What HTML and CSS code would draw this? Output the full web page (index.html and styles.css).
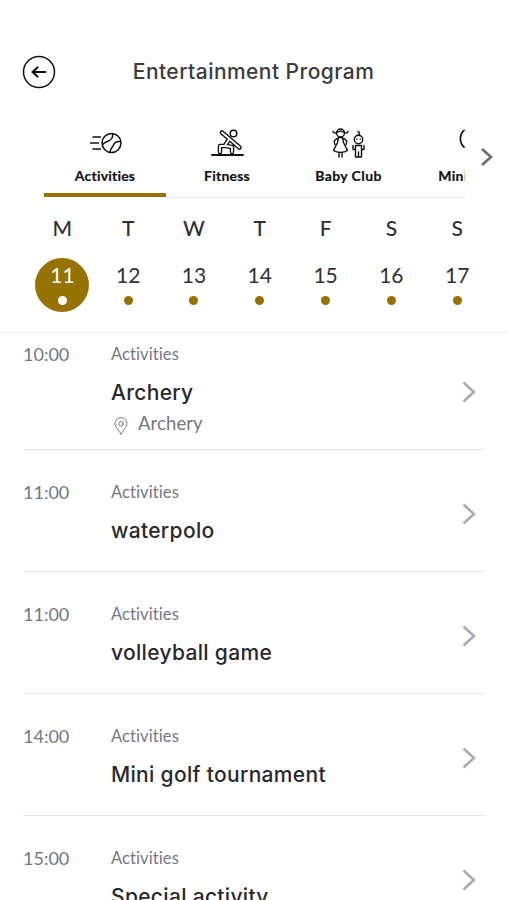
FILE: index.html
```html
<!DOCTYPE html>
<html lang="en">
<head>
<meta charset="utf-8">
<title>Entertainment Program</title>
<link rel="stylesheet" href="styles.css">
</head>
<body>
<div class="app">
  <header class="header">
    <button class="back" aria-label="Back">
      <svg width="34" height="34" viewBox="0 0 34 34"><circle cx="17" cy="17" r="15.500" stroke-width="1.500"/><path d="M23.500 17H11M15.500 12.500L10.500 17l5 4.500" stroke-width="2.200"/></svg>
    </button>
    <h1 class="page-title">Entertainment Program</h1>
  </header>

  <div class="tabs-row">
    <nav class="tabs">
      <a class="tab active">
        <svg class="icon" width="34" height="32" viewBox="0 0 34 32"><circle cx="23.500" cy="16" r="9.500"/><path d="M5 10h7.500M2.500 16h8M5 22h7.500M24.500 6.700c1 4-1 6-4.500 7.500s-5 1.500-5.500 4M32.500 14.500c-4.500-.5-6 1-7 3.500s-3 3-3.500 7"/></svg>
        <span class="label">Activities</span>
      </a>
      <a class="tab">
        <svg class="icon" width="34" height="32" viewBox="0 0 34 32"><path d="M2 28h31" stroke-width="1.800"/><g class="limbs"><path d="M19 12.500l-4 6M10 25v-6h5.500L22 20v5M12 5.500l17.500 15"/></g><g class="limbs-fill"><path d="M19 12.500l-4 6M10 25v-6h5.500L22 20v5M12 5.500l17.500 15"/></g><circle cx="23.500" cy="6.500" r="3.300"/></svg>
        <span class="label">Fitness</span>
      </a>
      <a class="tab">
        <svg class="icon kids" width="36" height="32" viewBox="0 0 36 32"><circle cx="10.500" cy="6" r="4"/><path d="M7 5c2 .2 2.500-1 3.500-1s1.500 1.200 3.500 1M6.500 5.500C5 6.500 3.500 6 3 4.500M14.500 5.500c1.500 1 3 .5 3.500-1M8.500 10.500h4l1 5 4 8c-3 2.500-11 2.500-14 0l4-8zM7 11.500L4.200 14l.6 3.500M14 11.500l2.800 2.500-.6 3.500M9 25.500V30M12 25.500V30"/><circle cx="28.500" cy="12.500" r="4.200"/><path d="M28.500 8.200c1.500-1 1.200-3-.5-3.700M26.800 12.200h.1M30.200 12.200h.1M25.500 18.500h6V30h-6zM25.500 22.500h-2.500v-4M31.500 22.500h2.500v-4M28.500 25v5"/></svg>
        <span class="label">Baby Club</span>
      </a>
      <a class="tab">
        <svg class="icon" width="34" height="32" viewBox="0 0 34 32"><path d="M10 3.500C5.200 7 5.200 16 10 20" stroke-width="1.700"/></svg>
        <span class="label">Mini Club</span>
      </a>
    </nav>
    <svg class="next" width="14" height="20" viewBox="0 0 14 20"><path d="M2 2l9 8-9 8"/></svg>
  </div>

  <section class="week">
    <div class="day selected"><b>M</b><span class="date">11<i></i></span></div>
    <div class="day"><b>T</b><span class="date">12<i></i></span></div>
    <div class="day"><b>W</b><span class="date">13<i></i></span></div>
    <div class="day"><b>T</b><span class="date">14<i></i></span></div>
    <div class="day"><b>F</b><span class="date">15<i></i></span></div>
    <div class="day"><b>S</b><span class="date">16<i></i></span></div>
    <div class="day"><b>S</b><span class="date">17<i></i></span></div>
  </section>

  <main class="events">
    <article class="event first">
      <time>10:00</time>
      <div class="info"><p class="category">Activities</p><h2>Archery</h2>
        <p class="place"><svg width="14" height="18" viewBox="0 0 14 18"><path d="M7 17C4.500 13 1 10 1 6.700a6 6 0 0 1 12 0C13 10 9.500 13 7 17z"/><circle cx="7" cy="6.800" r="2.300"/></svg><span>Archery</span></p></div>
      <svg class="chevron" width="16" height="22" viewBox="0 0 16 22"><path d="M2.500 1.500L13 11 2.500 20.500"/></svg>
    </article>
    <article class="event">
      <time>11:00</time>
      <div class="info"><p class="category">Activities</p><h2>waterpolo</h2></div>
      <svg class="chevron" width="16" height="22" viewBox="0 0 16 22"><path d="M2.500 1.500L13 11 2.500 20.500"/></svg>
    </article>
    <article class="event">
      <time>11:00</time>
      <div class="info"><p class="category">Activities</p><h2>volleyball game</h2></div>
      <svg class="chevron" width="16" height="22" viewBox="0 0 16 22"><path d="M2.500 1.500L13 11 2.500 20.500"/></svg>
    </article>
    <article class="event">
      <time>14:00</time>
      <div class="info"><p class="category">Activities</p><h2>Mini golf tournament</h2></div>
      <svg class="chevron" width="16" height="22" viewBox="0 0 16 22"><path d="M2.500 1.500L13 11 2.500 20.500"/></svg>
    </article>
    <article class="event">
      <time>15:00</time>
      <div class="info"><p class="category">Activities</p><h2>Special activity</h2></div>
      <svg class="chevron" width="16" height="22" viewBox="0 0 16 22"><path d="M2.500 1.500L13 11 2.500 20.500"/></svg>
    </article>
  </main>
</div>
</body>
</html>
```
FILE: styles.css
```css
* { box-sizing: border-box; margin: 0; padding: 0; }
body { background: #fff; font-family: Lato, "Open Sans", sans-serif; font-variant-ligatures: none; color: #303136; }
svg { display: block; fill: none; stroke: currentColor; stroke-linecap: round; stroke-linejoin: round; }
.app { width: 507px; height: 900px; overflow: hidden; }

.header { display: grid; grid-template-columns: 34px 1fr 34px; align-items: center; height: 127px; padding: 33px 22px 16px; }
.back { width: 34px; height: 34px; border: 0; background: none; color: #111; }
.page-title { font: 500 21px/30px Inter, sans-serif; letter-spacing: .45px; text-align: center; white-space: nowrap; color: #3b3b40; }

.tabs-row { display: flex; align-items: center; height: 72px; padding-left: 44px; }
.tabs { display: flex; width: 421px; height: 72px; overflow: hidden; margin-right: 15px; }
.tab { flex: 0 0 122px; display: flex; flex-direction: column; align-items: center; height: 71px; border-bottom: 1px solid #e6e6e8; color: #111; }
.tab .icon { stroke-width: 1.500; margin-left: -1px; }
.tab .kids { stroke-width: 1.400; margin-left: -3px; }
.limbs { stroke-width: 4.600; }
.limbs-fill { stroke: #fff; stroke-width: 1.800; }
.tab .label { margin-top: 7px; height: 27px; font: 700 14px/20px Lato, sans-serif; font-variant-ligatures: none; -webkit-text-stroke: .2px; letter-spacing: .2px; white-space: nowrap; }
.tab:nth-child(n+3) .label { margin-left: -1px; letter-spacing: .4px; }
.tab:nth-child(4) .label { margin-left: -2px; }
.tab.active { border-bottom: 0; }
.tab.active::after { content: ""; width: 122px; height: 4px; background: #967200; }
.next { color: #696b7c; stroke-width: 2.600; stroke-linecap: butt; stroke-linejoin: miter; margin-top: -12px; }

.week { display: grid; grid-template-columns: repeat(7, 65.800px); height: 134px; padding: 14px 0 0 29.500px; border-bottom: 1px solid #ededf0; }
.day { display: flex; flex-direction: column; align-items: center; }
.day b { font: 500 21px/30px Lato, sans-serif; }
.date { display: flex; flex-direction: column; align-items: center; width: 54px; height: 54px; margin-top: 15px; padding-top: 3px; border-radius: 50%; font: 400 21px/28px Lato, sans-serif; }
.date i { width: 9px; height: 9px; margin-top: 7px; border-radius: 50%; background: #967200; }
.selected .date { background: #967200; color: #fff; }
.selected .date i { background: #fff; }

.event { display: grid; grid-template-columns: 88px 1fr 16px; height: 122px; margin: 0 22px 0 23px; padding-top: 30px; border-bottom: 1px solid #e7e7ea; }
.event.first { height: 117px; padding-top: 9px; }
.event time { font-size: 18px; line-height: 24px; color: #757782; }
.category { font-size: 16.500px; line-height: 24px; letter-spacing: .1px; color: #757782; }
.event h2 { margin-top: 12px; font: 500 21px/30px Inter, sans-serif; letter-spacing: .32px; white-space: nowrap; color: #29292d; }
.place { display: flex; align-items: center; gap: 10px; padding-left: 3px; margin-top: 1px; font-size: 18.500px; line-height: 28px; letter-spacing: .1px; color: #757782; }
.place svg { margin-top: 6px; stroke-width: 1; }
.chevron { margin: 23px 0 0 -8px; color: #a9abb8; stroke-width: 2.600; stroke-linecap: butt; stroke-linejoin: miter; }
.first .chevron { margin-top: 39px; }
```
